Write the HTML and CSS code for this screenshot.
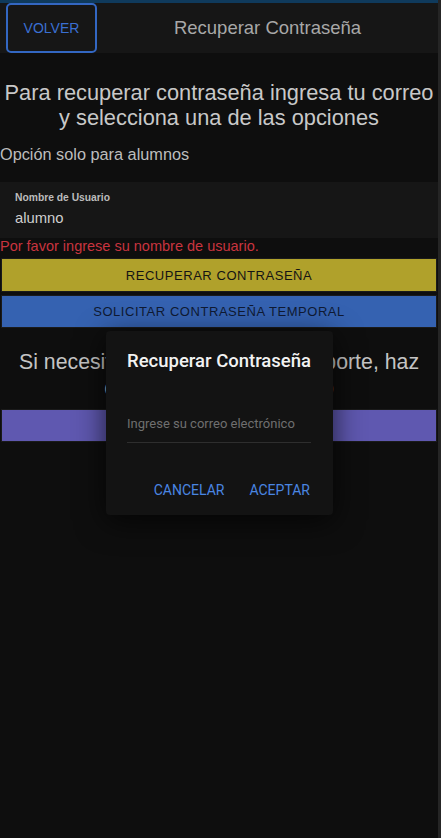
FILE: index.html
```html
<!DOCTYPE html>
<html lang="es">
<head>
<meta charset="utf-8">
<title>Recuperar Contraseña</title>
<link rel="stylesheet" href="styles.css">
</head>
<body>
<div class="page">
  <div class="main">
    <div class="topline"></div>
    <header class="header">
      <button class="back">VOLVER</button>
      <div class="header-title">Recuperar Contraseña</div>
    </header>
    <h1 class="intro">Para recuperar contraseña ingresa tu correo y selecciona una de las opciones</h1>
    <p class="note">Opción solo para alumnos</p>
    <div class="field">
      <label class="field-label">Nombre de Usuario</label>
      <div class="field-value">alumno</div>
    </div>
    <p class="error">Por favor ingrese su nombre de usuario.</p>
    <button class="btn btn-yellow">RECUPERAR CONTRASEÑA</button>
    <button class="btn btn-blue">SOLICITAR CONTRASEÑA TEMPORAL</button>
    <p class="support">Si necesitas comunicarte con soporte, haz clic en el botón de abajo</p>
    <button class="btn btn-purple">CONTACTAR SOPORTE</button>
  </div>
  <div class="scrollbar"></div>
</div>
<div class="dialog">
  <h2 class="dialog-title">Recuperar Contraseña</h2>
  <div class="dialog-input">Ingrese su correo electrónico</div>
  <div class="dialog-actions">
    <button class="dlg-btn">CANCELAR</button>
    <button class="dlg-btn">ACEPTAR</button>
  </div>
</div>
</body>
</html>
```
FILE: styles.css
```css
* { box-sizing: border-box; }
html, body { margin: 0; height: 100%; }
body {
  background: #0e0e0e;
  font-family: "Liberation Sans", Arial, sans-serif;
  color: #c4c4c4;
  position: relative;
  overflow: hidden;
}
.page { display: flex; height: 100%; }
.main { flex: 1; display: flex; flex-direction: column; }
.scrollbar { width: 3px; background: #252525; }
.topline { height: 3px; background: #0f3a5c; }
.header {
  height: 50px;
  background: #161616;
  display: flex;
  align-items: center;
  padding-left: 6px;
}
.back {
  width: 91px;
  height: 50px;
  background: transparent;
  border: 2px solid #3367c2;
  border-radius: 5px;
  color: #3a6fd2;
  font-family: "Liberation Sans", Arial, sans-serif;
  font-size: 14px;
  padding: 0;
}
.header-title {
  flex: 1;
  text-align: center;
  font-size: 18.5px;
  color: #a8a8a8;
}
.intro {
  margin: 27px 0 0;
  font-size: 21.8px;
  font-weight: normal;
  line-height: 25px;
  text-align: center;
  color: #c8c8c8;
}
.note {
  margin: 15px 0 0;
  font-size: 16.3px;
  color: #bdbdbd;
  line-height: 18px;
}
.field {
  margin-top: 19px;
  height: 56px;
  background: #161616;
  padding: 9px 15px 0;
}
.field-label {
  display: block;
  font-size: 10.3px;
  font-weight: bold;
  color: #bcbcbc;
  line-height: 13px;
}
.field-value {
  margin-top: 5px;
  font-size: 14.8px;
  color: #cfcfcf;
  line-height: 18px;
}
.error {
  margin: 0;
  font-size: 14.5px;
  line-height: 17px;
  color: #c8343f;
}
.btn {
  display: block;
  margin-left: 1px;
  width: 436px;
  height: 34px;
  border: 1px solid #1a1a1a;
  font-family: "Liberation Sans", Arial, sans-serif;
  font-size: 13px;
  letter-spacing: 0.55px;
  color: #141414;
  padding: 0;
}
.btn-yellow { margin-top: 3px; background: #b0a12b; }
.btn-blue { margin-top: 3px; background: #3562b1; color: #0f1a33; height: 33px; }
.support {
  margin: 21px 0 0;
  font-size: 21.3px;
  line-height: 26px;
  text-align: center;
  color: #c4c4c4;
  padding: 0 8px;
}
.btn-purple {
  margin-top: 8px;
  background: #5f58b0;
  color: #151515;
  height: 33px;
}
.dialog {
  position: absolute;
  left: 106px;
  top: 331px;
  width: 227px;
  height: 184px;
  background: #131313;
  border-radius: 4px;
  box-shadow: 0 6px 30px rgba(0,0,0,0.7);
  padding: 18px 21px 0;
  font-family: Roboto, "Liberation Sans", sans-serif;
}
.dialog-title {
  margin: 0;
  font-size: 18.5px;
  font-weight: 500;
  color: #f2f2f2;
  line-height: 24px;
}
.dialog-input {
  margin-top: 43px;
  font-size: 13px;
  color: #6f6f6f;
  line-height: 16px;
  padding-bottom: 10px;
  border-bottom: 1px solid #2e2e2e;
  margin-right: 1px;
}
.dialog-actions {
  margin-top: 39px;
  display: flex;
  justify-content: flex-end;
  gap: 25px;
  padding-right: 2px;
}
.dlg-btn {
  background: none;
  border: none;
  padding: 0;
  font-family: Roboto, "Liberation Sans", sans-serif;
  font-size: 14px;
  color: #4a86e2;
}
```
